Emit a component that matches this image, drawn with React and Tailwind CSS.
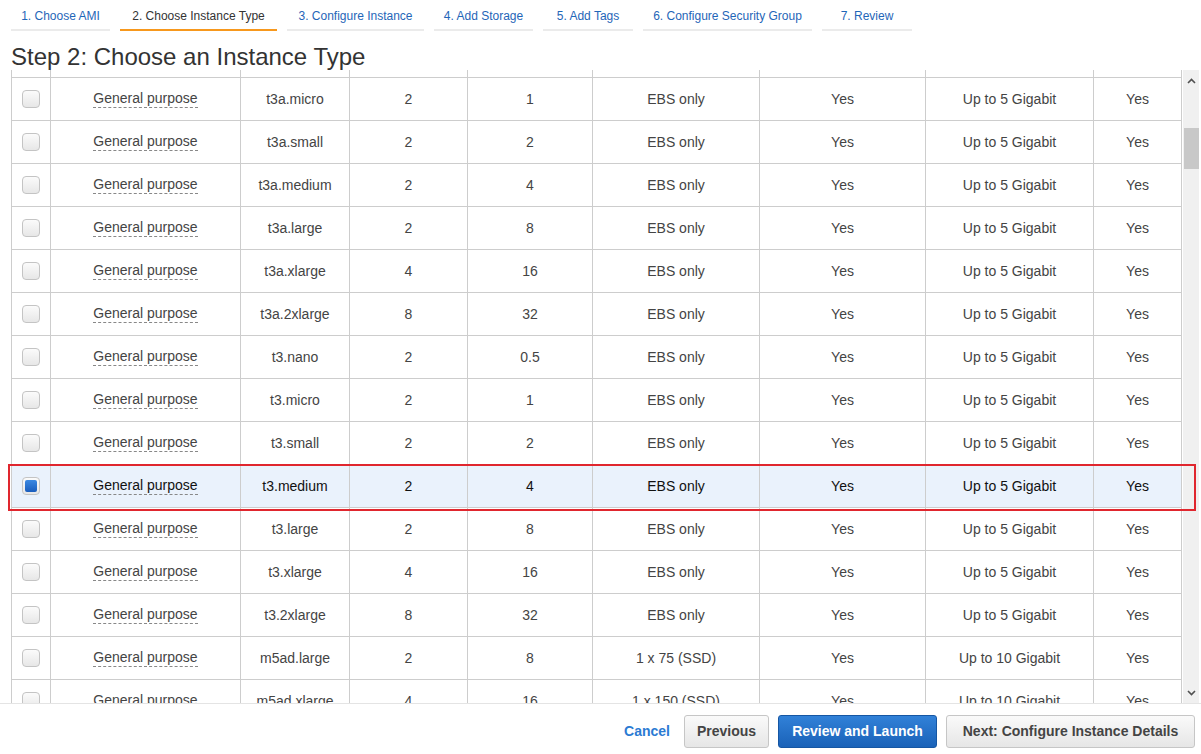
import React from "react";

const tabs = [
  { label: "1. Choose AMI", w: "w-[99px]" },
  { label: "2. Choose Instance Type", w: "w-[157px]", active: true },
  { label: "3. Configure Instance", w: "w-[137px]" },
  { label: "4. Add Storage", w: "w-[99px]" },
  { label: "5. Add Tags", w: "w-[90px]" },
  { label: "6. Configure Security Group", w: "w-[169px]" },
  { label: "7. Review", w: "w-[90px]" },
];

const rows = [
  ["t3a.micro", "2", "1", "EBS only", "Up to 5 Gigabit"],
  ["t3a.small", "2", "2", "EBS only", "Up to 5 Gigabit"],
  ["t3a.medium", "2", "4", "EBS only", "Up to 5 Gigabit"],
  ["t3a.large", "2", "8", "EBS only", "Up to 5 Gigabit"],
  ["t3a.xlarge", "4", "16", "EBS only", "Up to 5 Gigabit"],
  ["t3a.2xlarge", "8", "32", "EBS only", "Up to 5 Gigabit"],
  ["t3.nano", "2", "0.5", "EBS only", "Up to 5 Gigabit"],
  ["t3.micro", "2", "1", "EBS only", "Up to 5 Gigabit"],
  ["t3.small", "2", "2", "EBS only", "Up to 5 Gigabit"],
  ["t3.medium", "2", "4", "EBS only", "Up to 5 Gigabit", true],
  ["t3.large", "2", "8", "EBS only", "Up to 5 Gigabit"],
  ["t3.xlarge", "4", "16", "EBS only", "Up to 5 Gigabit"],
  ["t3.2xlarge", "8", "32", "EBS only", "Up to 5 Gigabit"],
  ["m5ad.large", "2", "8", "1 x 75 (SSD)", "Up to 10 Gigabit"],
  ["m5ad.xlarge", "4", "16", "1 x 150 (SSD)", "Up to 10 Gigabit"],
];

const cellBase = "flex items-center justify-center border-r border-[#cdcdcd] h-full shrink-0";
const widths = ["w-[39px]", "w-[190px]", "w-[109px]", "w-[118px]", "w-[125px]", "w-[167px]", "w-[166px]", "w-[168px]", "w-[88px]"];

function Checkbox({ checked }) {
  return (
    <div className="w-[18px] h-[18px] rounded-[4px] border border-[#c4c4c4] bg-gradient-to-b from-[#fbfbfb] to-[#e7e7e7] flex items-center justify-center">
      {checked && <div className="w-[12px] h-[12px] rounded-[2px] bg-gradient-to-b from-[#3c89e2] to-[#1a5dbd]" />}
    </div>
  );
}

function Row({ r }) {
  const [type, vcpu, mem, storage, net, selected] = r;
  const txt = selected ? "text-[#111]" : "text-[#444]";
  return (
    <div className={`flex h-[43px] border-b border-[#cdcdcd] shrink-0 ${selected ? "bg-[#eaf2fc]" : "bg-white"} ${txt}`}>
      <div className={`${cellBase} ${widths[0]}`}>
        <Checkbox checked={selected} />
      </div>
      <div className={`${cellBase} ${widths[1]}`}>
        <span className="border-b border-dashed border-[#888] leading-[16px] pb-[1px]">General purpose</span>
      </div>
      <div className={`${cellBase} ${widths[2]}`}>{type}</div>
      <div className={`${cellBase} ${widths[3]}`}>{vcpu}</div>
      <div className={`${cellBase} ${widths[4]}`}>{mem}</div>
      <div className={`${cellBase} ${widths[5]}`}>{storage}</div>
      <div className={`${cellBase} ${widths[6]}`}>Yes</div>
      <div className={`${cellBase} ${widths[7]}`}>{net}</div>
      <div className={`${cellBase} ${widths[8]}`}>Yes</div>
    </div>
  );
}

function Chevron({ up }) {
  return (
    <svg width="9" height="6" viewBox="0 0 9 6">
      <path d={up ? "M1 5 L4.5 1.5 L8 5" : "M1 1 L4.5 4.5 L8 1"} fill="none" stroke="#505050" strokeWidth="1.6" />
    </svg>
  );
}

export default function App() {
  return (
    <div className="relative w-[1201px] h-[754px] overflow-hidden bg-white text-[14px]" style={{ fontFamily: '"Liberation Sans", Arial, sans-serif' }}>
      {/* Wizard tabs */}
      <div className="flex gap-[10px] pl-[11px] pt-[8px]">
        {tabs.map((t) => (
          <div
            key={t.label}
            className={`${t.w} text-center text-[12px] leading-[17px] pb-[4px] border-b-2 ${t.active ? "border-[#f7981d] text-[#333]" : "border-[#ebebeb] text-[#1f66b8]"}`}
          >
            {t.label}
          </div>
        ))}
      </div>

      <h1 className="mt-[12px] pl-[11px] text-[24px] leading-[27px] text-[#333]">Step 2: Choose an Instance Type</h1>

      {/* Table area */}
      <div className="flex h-[634px] border-b border-[#e4e4e4]">
        <div className="ml-[11px] w-[1171px] h-full overflow-hidden border-l border-[#cdcdcd] flex flex-col">
          <div className="flex h-[8px] border-b border-[#cdcdcd] shrink-0">
            {widths.map((w, i) => (
              <div key={i} className={`${cellBase} ${w}`} />
            ))}
          </div>
          {rows.map((r) => (
            <Row key={r[0]} r={r} />
          ))}
        </div>
        <div className="ml-[1px] w-[16px] h-full bg-[#f0f0f0] flex flex-col items-center">
          <div className="h-[20px] flex items-center justify-center pt-[1px]">
            <Chevron up />
          </div>
          <div className="mt-[38px] w-[15px] h-[41px] bg-[#c8c8c8]" />
          <div className="flex-1" />
          <div className="h-[20px] flex items-center justify-center">
            <Chevron />
          </div>
        </div>
      </div>

      {/* Footer */}
      <div className="flex justify-end items-start pt-[11px] pr-[6px] font-bold">
        <div className="h-[33px] flex items-center text-[#2b7bd3] mr-[14px]">Cancel</div>
        <div className="w-[85px] h-[33px] flex items-center justify-center rounded-[3px] border border-[#c6c6c6] bg-gradient-to-b from-[#fafafa] to-[#e6e6e6] text-[#444] mr-[9px]">
          Previous
        </div>
        <div className="w-[159px] h-[33px] flex items-center justify-center rounded-[3px] border border-[#1556a3] bg-gradient-to-b from-[#3181d8] to-[#1a62b8] text-white mr-[9px]">
          Review and Launch
        </div>
        <div className="w-[249px] h-[33px] flex items-center justify-center rounded-[3px] border border-[#c6c6c6] bg-gradient-to-b from-[#fafafa] to-[#e6e6e6] text-[#444]">
          Next: Configure Instance Details
        </div>
      </div>

      {/* Red highlight annotation */}
      <div className="absolute left-[8px] top-[464px] w-[1188px] h-[47px] border-2 border-[#e0262e] pointer-events-none" />
    </div>
  );
}
